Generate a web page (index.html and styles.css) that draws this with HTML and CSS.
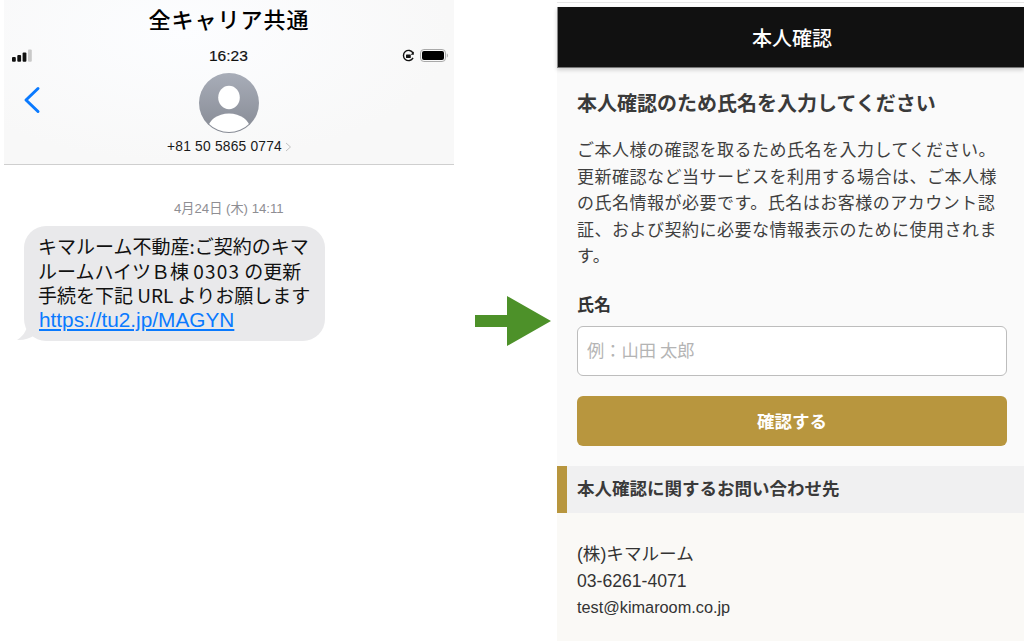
FILE: index.html
```html
<!DOCTYPE html>
<html lang="ja">
<head>
<meta charset="utf-8">
<title>本人確認</title>
<link rel="stylesheet" href="styles.css">
</head>
<body>
<main class="stage">
  <section class="phone">
    <header class="sms-head">
      <h2 class="carrier">全キャリア共通</h2>
      <div class="status">
        <svg class="signal" width="21" height="14" viewBox="0 0 21 14"><rect x="0" y="8" width="3.8" height="4.8" rx="1" fill="#111"/><rect x="5.300" y="6" width="3.800" height="6.800" rx="1" fill="#111"/><rect x="10.600" y="3.500" width="3.800" height="9.300" rx="1" fill="#111"/><rect x="16" y="0.500" width="3.800" height="12.300" rx="1" fill="#c9c9c9"/></svg>
        <span class="clock">16:23</span>
        <span class="status-right">
          <svg width="13" height="13" viewBox="0 0 12 12"><path d="M10.200 8.200A4.700 4.700 0 1 1 10.200 3.800" fill="none" stroke="#111" stroke-width="1.300"/><path d="M10.900 2.400v3h-3z" fill="#111"/><rect x="3.700" y="5" width="4.400" height="3.400" rx=".6" fill="#111"/></svg>
          <svg width="28" height="13" viewBox="0 0 28 13"><rect x=".5" y=".5" width="25" height="12" rx="3.400" fill="none" stroke="#a9a9a9" stroke-width="1"/><rect x="2" y="2" width="22" height="9" rx="2" fill="#000"/><path d="M26.800 4.500v4c.8-.3 1.200-1 1.200-2s-.4-1.700-1.200-2z" fill="#b5b5b5"/></svg>
        </span>
      </div>
      <div class="contact">
        <svg class="back" width="18" height="28" viewBox="0 0 18 28"><path d="M15 2.500 3 14l12 11.500" fill="none" stroke="#0a7aff" stroke-width="3" stroke-linecap="round" stroke-linejoin="round"/></svg>
        <svg class="avatar" width="60" height="60" viewBox="0 0 60 60"><defs><linearGradient id="av" x1="0" y1="0" x2="0" y2="1"><stop offset="0" stop-color="#a8adb8"/><stop offset="1" stop-color="#868a94"/></linearGradient><clipPath id="avc"><circle cx="30" cy="30" r="29"/></clipPath></defs><circle cx="30" cy="30" r="30" fill="url(#av)"/><ellipse cx="30" cy="24.500" rx="10.800" ry="11.800" fill="#fff"/><ellipse cx="30" cy="56" rx="21" ry="15.500" fill="#fff" clip-path="url(#avc)"/></svg>
        <p class="number">+81 50 5865 0774<svg class="chev" width="7" height="10" viewBox="0 0 7 10"><path d="M1 1l4.500 4L1 9" fill="none" stroke="#c2c2c2" stroke-width="1"/></svg></p>
      </div>
    </header>
    <p class="date">4月24日 (木) 14:11</p>
    <div class="bubble">
      <p class="msg">キマルーム不動産:ご契約のキマ<br>ルームハイツＢ棟 <span class="wide">0303</span>の更新<br>手続を下記 URL よりお願します<a class="link" href="#">https://tu2.jp/MAGYN</a></p>
      <svg class="tail" width="20" height="16" viewBox="0 0 20 16"><path d="M10 0C10 6 5 12 0 15c6 .5 12-1 18-5z" fill="#e9e9eb"/></svg>
    </div>
  </section>

  <div class="arrow-col">
    <svg width="76" height="50" viewBox="0 0 76 50"><path d="M0 19h32V0l44 25-44 25V31H0z" fill="#4d9129"/></svg>
  </div>

  <section class="site">
    <div class="site-top"></div>
    <header class="site-head">本人確認</header>
    <div class="site-body">
      <h1 class="title">本人確認のため氏名を入力してください</h1>
      <p class="lead">ご本人様の確認を取るため氏名を入力してください。更新確認など当サービスを利用する場合は、ご本人様の氏名情報が必要です。氏名はお客様のアカウント認証、および契約に必要な情報表示のために使用されます。</p>
      <label class="label" for="name">氏名</label>
      <input class="field" id="name" type="text" placeholder="例：山田 太郎">
      <button class="submit" type="button">確認する</button>
    </div>
    <h3 class="inq-head">本人確認に関するお問い合わせ先</h3>
    <div class="inq-body">
      <p class="inq-line">(株)キマルーム</p>
      <p class="inq-line">03-6261-4071</p>
      <p class="inq-line inq-mail">test@kimaroom.co.jp</p>
    </div>
  </section>
</main>
</body>
</html>
```

FILE: styles.css
```css
* { box-sizing: border-box; margin: 0; padding: 0; }
html, body { height: 641px; overflow: hidden; background: #fff; }
body { font-family: "Liberation Sans", "Noto Sans CJK JP", sans-serif; color: #111; }
.stage { display: flex; width: 1024px; height: 641px; }

.phone { width: 454px; padding-left: 4px; flex: none; display: flex; flex-direction: column; }
.sms-head { height: 165px; background: radial-gradient(ellipse at 40% 20%, #fcfdff 0, #f8f8f8 70%); border-bottom: 1px solid #cfcfcf; display: flex; flex-direction: column; align-items: center; }
.carrier { height: 38px; font-family: "Noto Sans CJK JP", sans-serif; font-size: 22px; font-weight: 500; line-height: 36px; letter-spacing: 1px; color: #000; }
.status { align-self: stretch; height: 35px; display: flex; align-items: center; justify-content: space-between; padding: 0 6px 0 8px; position: relative; }
.clock { font-size: 15.500px; font-weight: 400; -webkit-text-stroke: .2px #111; position: absolute; left: 205px; }
.status-right { display: flex; align-items: center; gap: 5px; }
.contact { position: relative; align-self: stretch; display: flex; flex-direction: column; align-items: center; }
.back { position: absolute; left: 19px; top: 13px; }
.number { margin-top: 5px; font-size: 13.800px; line-height: 18px; letter-spacing: .2px; display: flex; align-items: center; gap: 3px; padding-left: 1px; color: #1a1a1a; }
.date { margin-top: 35px; margin-left: 170px; font-size: 13.200px; line-height: 17px; color: #8e8e93; }
.bubble { position: relative; margin: 9px 0 0 20px; width: 301px; height: 115px; padding: 8px 10px 0 14px; background: #e9e9eb; border-radius: 22px; }
.msg { position: relative; z-index: 1; font-family: "Noto Sans CJK JP", sans-serif; font-size: 19px; line-height: 24.500px; white-space: nowrap; color: #111; }
.wide { letter-spacing: 1.200px; margin-right: 4px; }
.link { display: block; margin-left: 1px; color: #0a7aff; font-family: "Liberation Sans", sans-serif; font-size: 20.800px; line-height: 23px; }
.tail { position: absolute; left: -7px; bottom: 0; }

.arrow-col { width: 103px; flex: none; display: flex; padding: 296px 0 0 21px; }
.arrow-col svg { display: block; }

.site { flex: 1; display: flex; flex-direction: column; font-family: "Noto Sans CJK JP", sans-serif; color: #333; }
.site-top { height: 7px; background: linear-gradient(#fff 2px, #e6e6e6 2px, #e6e6e6 3px, #fff 3px); }
.site-head { height: 61px; background: #111; color: #fff; font-size: 20px; font-weight: 500; line-height: 61px; text-align: center; padding-left: 2px; border-left: 1px solid #888; border-bottom: 1px solid #777; box-shadow: 0 2px 4px rgba(0,0,0,.18); position: relative; }
.site-body { background: #fafafa; height: 398px; padding: 23px 17px 0 20px; display: flex; flex-direction: column; }
.title { font-size: 20px; font-weight: 700; line-height: 24px; color: #3a3a3a; }
.lead { margin-top: 21px; font-size: 17px; letter-spacing: .5px; line-height: 26.500px; color: #3f3f3f; }
.label { margin-top: 23px; font-size: 17px; font-weight: 700; line-height: 24px; color: #333; }
.field { margin-top: 10px; height: 50px; border: 1.500px solid #bdbdbd; border-radius: 6px; background: #fff; padding: 0 9px 2px; font: 400 17.300px "Noto Sans CJK JP", sans-serif; }
.field::placeholder { color: #b4b4b4; opacity: 1; }
.submit { margin-top: 20px; height: 50px; border: 0; border-radius: 6px; background: #b8963e; color: #fff; font: 700 17.500px "Noto Sans CJK JP", sans-serif; }
.inq-head { height: 47px; background: #f0f0f1; border-left: 10px solid #b8963e; padding-left: 10px; font-size: 17.500px; font-weight: 700; line-height: 43px; color: #3a3a3a; }
.inq-body { flex: 1; background: #faf9f6; padding-top: 28px; }
.inq-line { padding-left: 20px; font-size: 17.600px; line-height: 26.500px; color: #333; font-family: "Liberation Sans", "Noto Sans CJK JP", sans-serif; }
.inq-mail { font-size: 16.300px; }
```
